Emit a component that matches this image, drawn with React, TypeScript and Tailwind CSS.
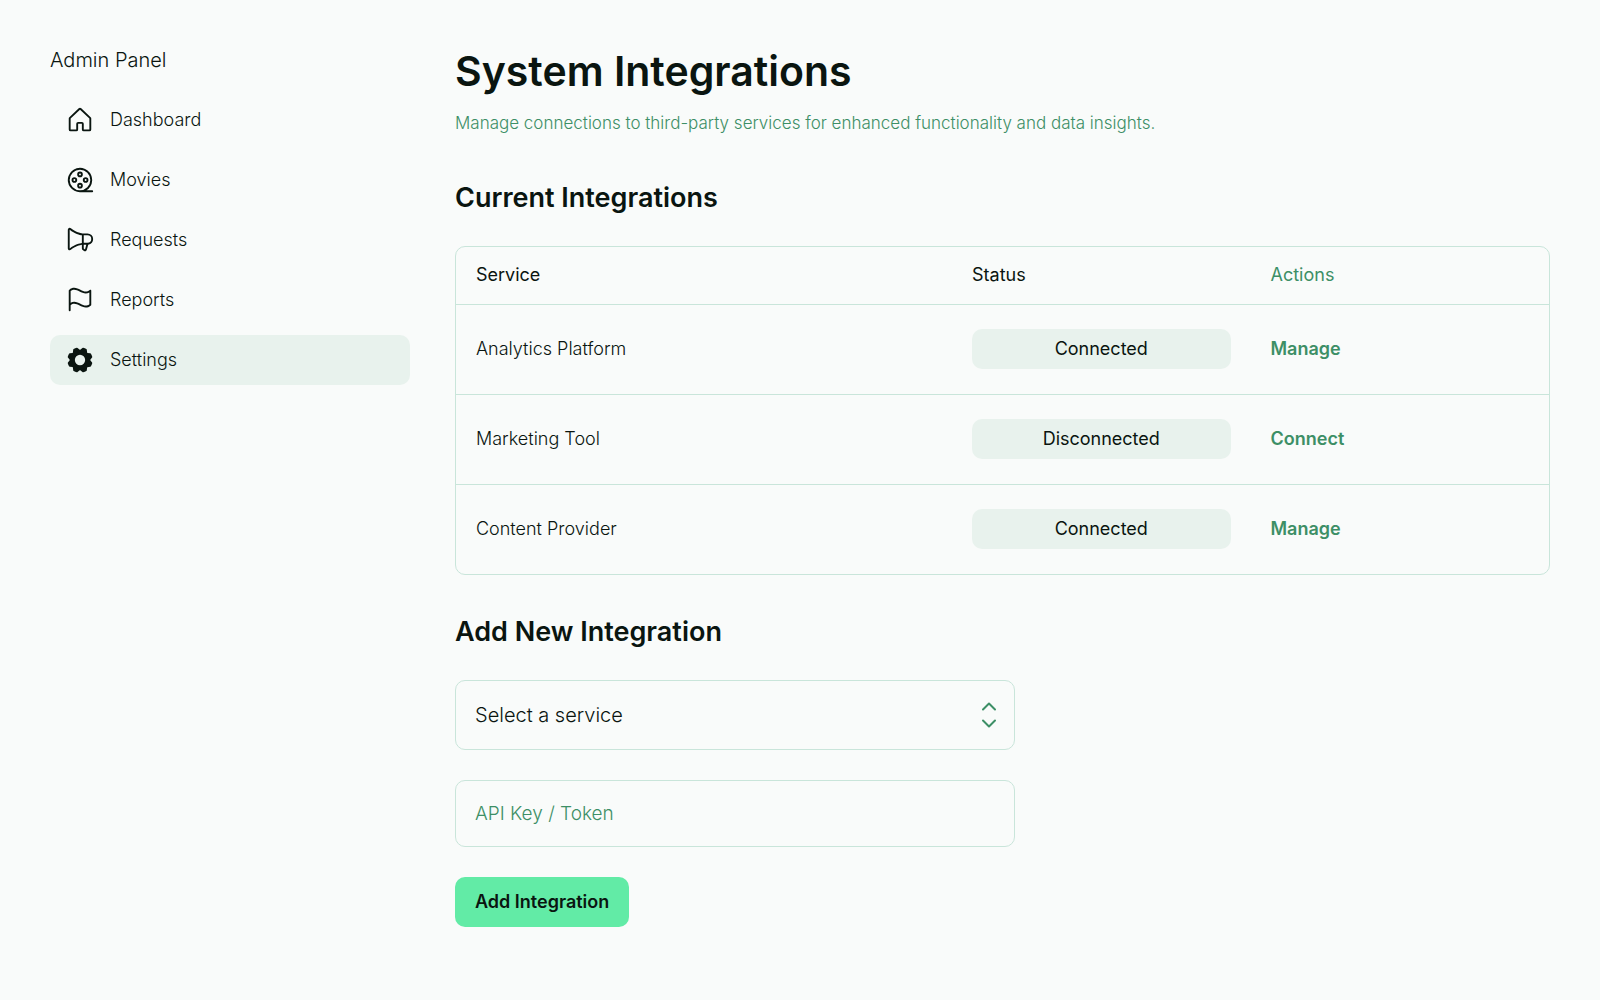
import { PiFilmReel } from "react-icons/pi";
import type { ComponentType } from "react";

type IconProps = { className?: string };

function HouseIcon({ className }: IconProps) {
  return (
    <svg viewBox="0 0 256 256" fill="currentColor" className={className} aria-hidden="true">
      <path d="M218.83,103.77l-80-75.48a1.14,1.14,0,0,1-.11-.11,16,16,0,0,0-21.53,0l-.11.11L37.17,103.77A16,16,0,0,0,32,115.55V208a16,16,0,0,0,16,16H96a16,16,0,0,0,16-16V160h32v48a16,16,0,0,0,16,16h48a16,16,0,0,0,16-16V115.55A16,16,0,0,0,218.83,103.77ZM208,208H160V160a16,16,0,0,0-16-16H112a16,16,0,0,0-16,16v48H48V115.55l.11-.1L128,40l79.9,75.43.11.1Z" />
    </svg>
  );
}

function MegaphoneIcon({ className }: IconProps) {
  return (
    <svg viewBox="0 0 256 256" fill="currentColor" className={className} aria-hidden="true">
      <path d="M240,120a48.05,48.05,0,0,0-48-48H152.2c-2.91-.17-53.62-3.74-101.91-44.24A16,16,0,0,0,24,40V200a16,16,0,0,0,26.29,12.25c37.77-31.68,77-40.76,93.71-43.3v31.72A16,16,0,0,0,151.12,214l11,7.33A16,16,0,0,0,186.5,212l11.77-44.36A48.07,48.07,0,0,0,240,120ZM40,199.93V40h0c42.81,35.91,86.63,45,104,47.24v65.48C126.65,155,82.84,164.07,40,199.93Zm131,8,0,.11-11-7.33V168h21.6ZM192,152H160V88h32a32,32,0,1,1,0,64Z" />
    </svg>
  );
}

function FlagIcon({ className }: IconProps) {
  return (
    <svg viewBox="0 0 256 256" fill="currentColor" className={className} aria-hidden="true">
      <path d="M34.76,42A8,8,0,0,0,32,48V216a8,8,0,0,0,16,0V171.77c26.79-21.16,49.87-9.75,76.45,3.41,16.4,8.11,34.06,16.85,53,16.85,13.93,0,28.54-4.75,43.82-18a8,8,0,0,0,2.76-6V48A8,8,0,0,0,210.76,42c-28,24.23-51.72,12.49-79.21-1.12C103.07,26.76,70.78,10.79,34.76,42ZM208,164.25c-26.79,21.16-49.87,9.74-76.45-3.41-25-12.35-52.81-26.13-83.55-8.4V51.79c26.79-21.16,49.87-9.75,76.45,3.4,25,12.35,52.82,26.13,83.55,8.4Z" />
    </svg>
  );
}

function GearIcon({ className }: IconProps) {
  return (
    <svg viewBox="0 0 256 256" fill="currentColor" className={className} aria-hidden="true">
      <path
        fillRule="evenodd"
        d="M216,130.16q.06-2.16,0-4.32l14.92-18.64a8,8,0,0,0,1.48-7.06,107.6,107.6,0,0,0-10.88-26.25,8,8,0,0,0-6-3.93l-23.72-2.64q-1.48-1.56-3-3L186,40.54a8,8,0,0,0-3.94-6,107.29,107.29,0,0,0-26.25-10.86,8,8,0,0,0-7.06,1.48L130.16,40Q128,40,125.84,40L107.2,25.11a8,8,0,0,0-7.06-1.48A107.6,107.6,0,0,0,73.89,34.51a8,8,0,0,0-3.93,6L67.32,64.27q-1.56,1.49-3,3L40.54,70a8,8,0,0,0-6,3.94,107.71,107.71,0,0,0-10.87,26.25,8,8,0,0,0,1.49,7.06L40,125.84Q40,128,40,130.16L25.11,148.8a8,8,0,0,0-1.48,7.06,107.6,107.6,0,0,0,10.88,26.25,8,8,0,0,0,6,3.93l23.72,2.64q1.49,1.56,3,3L70,215.46a8,8,0,0,0,3.94,6,107.71,107.71,0,0,0,26.25,10.87,8,8,0,0,0,7.06-1.49L125.84,216q2.16.06,4.32,0l18.64,14.92a8,8,0,0,0,7.06,1.48,107.21,107.21,0,0,0,26.25-10.88,8,8,0,0,0,3.93-6l2.64-23.72q1.56-1.48,3-3L215.46,186a8,8,0,0,0,6-3.94,107.71,107.71,0,0,0,10.87-26.25,8,8,0,0,0-1.49-7.06ZM128,172a44,44,0,1,1,44-44A44,44,0,0,1,128,172Z"
      />
    </svg>
  );
}

const navItems: { label: string; icon: ComponentType<IconProps>; active?: boolean }[] = [
  { label: "Dashboard", icon: HouseIcon },
  { label: "Movies", icon: PiFilmReel },
  { label: "Requests", icon: MegaphoneIcon },
  { label: "Reports", icon: FlagIcon },
  { label: "Settings", icon: GearIcon, active: true },
];

const integrations = [
  { service: "Analytics Platform", status: "Connected", action: "Manage" },
  { service: "Marketing Tool", status: "Disconnected", action: "Connect" },
  { service: "Content Provider", status: "Connected", action: "Manage" },
];

function Sidebar() {
  return (
    <aside className="w-[360px] shrink-0">
      <p className="text-xl leading-5 font-[350]">Admin Panel</p>
      <nav aria-label="Admin" className="mt-[25px] flex flex-col gap-[10px]">
        {navItems.map(({ label, icon: Icon, active }) => (
          <a
            key={label}
            href="#"
            aria-current={active ? "page" : undefined}
            className={`flex h-[50px] items-center gap-[15px] rounded-[10px] px-[15px] text-lg font-[350] ${
              active ? "bg-[#e8f2ed]" : ""
            }`}
          >
            <Icon className="size-[30px]" />
            {label}
          </a>
        ))}
      </nav>
    </aside>
  );
}

function IntegrationsTable() {
  return (
    <div className="mt-8 overflow-hidden rounded-[10px] border border-[#c9e5da]">
      <table className="w-full table-fixed text-left text-lg">
        <thead>
          <tr className="h-[57px]">
            <th className="w-[496px] px-5 font-[380]">Service</th>
            <th className="px-5 font-[380]">Status</th>
            <th className="px-5 font-[380] text-[#3d8f66]">Actions</th>
          </tr>
        </thead>
        <tbody>
          {integrations.map((row) => (
            <tr key={row.service} className="h-[90px] border-t border-[#c9e5da]">
              <td className="px-5 font-light">{row.service}</td>
              <td className="px-5">
                <span className="flex h-10 items-center justify-center rounded-[10px] bg-[#e8f2ed] font-[380]">
                  {row.status}
                </span>
              </td>
              <td className="px-5">
                <button type="button" className="font-semibold text-[#3d8f66]">
                  {row.action}
                </button>
              </td>
            </tr>
          ))}
        </tbody>
      </table>
    </div>
  );
}

function AddIntegrationForm() {
  return (
    <form className="mt-8 flex max-w-[560px] flex-col items-start gap-[30px]">
      <div className="relative w-full">
        <select
          aria-label="Service"
          className="h-[70px] w-full appearance-none rounded-[10px] border border-[#c9e5da] bg-[#f9fbfa] px-[19px] text-xl font-light"
        >
          <option>Select a service</option>
          {integrations.map((row) => (
            <option key={row.service}>{row.service}</option>
          ))}
        </select>
        <svg
          viewBox="0 0 30 30"
          className="pointer-events-none absolute inset-y-0 right-[11px] my-auto size-[30px] fill-none stroke-[#3d8f66] stroke-2"
          strokeLinecap="round"
          strokeLinejoin="round"
          aria-hidden="true"
        >
          <path d="M9 9.5 15 3.5 21 9.5M9 20.5 15 26.5 21 20.5" />
        </svg>
      </div>
      <input
        type="text"
        aria-label="API Key / Token"
        placeholder="API Key / Token"
        className="h-[67px] w-full rounded-[10px] border border-[#c9e5da] bg-[#f9fbfa] px-[19px] text-[19px] font-light placeholder:text-[#3d8f66]"
      />
      <button
        type="button"
        className="h-[50px] rounded-[10px] bg-[#62eba6] px-5 text-lg font-semibold"
      >
        Add Integration
      </button>
    </form>
  );
}

export default function App() {
  return (
    <div className="flex min-h-screen gap-[45px] bg-[#f9fbfa] px-[50px] py-[50px] font-['Inter',sans-serif] text-[#0a1510]">
      <Sidebar />
      <main className="min-w-0 flex-1">
        <h1 className="text-[41px] leading-[42px] font-semibold">System Integrations</h1>
        <p className="mt-[19px] text-[17px] leading-6 font-light text-[#3d8f66]">
          Manage connections to third-party services for enhanced functionality and data insights.
        </p>
        <h2 className="mt-[47px] text-[27px] leading-8 font-semibold">Current Integrations</h2>
        <IntegrationsTable />
        <h2 className="mt-[41px] text-[27px] leading-8 font-semibold">Add New Integration</h2>
        <AddIntegrationForm />
      </main>
    </div>
  );
}
